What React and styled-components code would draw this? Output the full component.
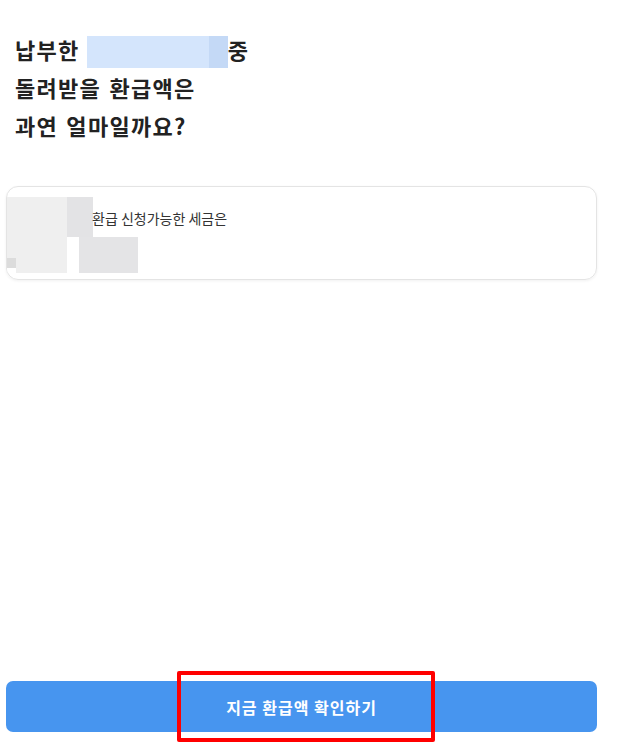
import styled, { createGlobalStyle } from "styled-components";

const GlobalStyle = createGlobalStyle`
  html, body {
    margin: 0;
    padding: 0;
    background: #fff;
  }
  body {
    font-family: "Noto Sans CJK KR", "Noto Sans", sans-serif;
  }
`;

const Page = styled.div`
  display: flex;
  flex-direction: column;
  height: 753px;
  box-sizing: border-box;
  padding: 0 20px 21px 6px;
`;

const Heading = styled.h1`
  margin: 30px 0 0 9px;
  font-size: 22px;
  font-weight: 700;
  line-height: 38px;
  color: #222;
  letter-spacing: 1.3px;
  word-spacing: 2px;
`;

const Masked = styled.span`
  display: inline-flex;
  vertical-align: middle;
  height: 32px;
  margin: -2px 0 0 7px;
  background: #d4e5fc;
  width: 141px;
  justify-content: flex-end;
  &::after {
    content: "";
    width: 19px;
    background: #c4d9f6;
  }
`;

const Card = styled.div`
  margin-top: 42px;
  height: 94px;
  box-sizing: border-box;
  border: 1px solid #e4e4e4;
  border-radius: 12px;
  box-shadow: 0 1px 3px rgba(0, 0, 0, 0.06);
  display: flex;
  align-items: flex-start;
  overflow: hidden;
`;

const Thumb = styled.svg`
  flex: 0 0 86px;
  height: 76px;
  margin-top: 10px;
  margin-left: -1px;
  display: block;
`;

const Label = styled.p`
  margin: 21px 0 0 0;
  font-size: 14px;
  color: #333;
  position: relative;
`;

const Spacer = styled.div`
  flex: 1;
`;

const ButtonWrap = styled.div`
  position: relative;
`;

const CtaButton = styled.button`
  width: 100%;
  height: 51px;
  border: none;
  border-radius: 7px;
  background: #4795ef;
  color: #fff;
  font-family: "Noto Sans CJK KR", "Noto Sans", sans-serif;
  font-size: 16px;
  font-weight: 700;
  letter-spacing: 1px;
  cursor: pointer;
`;

const Highlight = styled.div`
  position: absolute;
  left: 171px;
  top: -10px;
  width: 258px;
  height: 71px;
  box-sizing: border-box;
  border: 4px solid #ff0000;
  border-radius: 2px;
  pointer-events: none;
`;

export default function App() {
  return (
    <>
      <GlobalStyle />
      <Page>
        <Heading>
          납부한<Masked />중
          <br />
          돌려받을 환급액은
          <br />
          과연 얼마일까요?
        </Heading>
        <Card>
          <Thumb viewBox="0 0 86 76" overflow="visible">
            <rect x="0" y="0" width="61" height="76" fill="#efefef" />
            <rect x="61" y="0" width="26" height="40" fill="#e3e3e5" />
            <rect x="73" y="40" width="59" height="36" fill="#e4e4e6" />
            <rect x="0" y="61" width="10" height="10" fill="#dcdcdc" />
            <rect x="0" y="71" width="10" height="5" fill="#fff" />
          </Thumb>
          <Label>환급 신청가능한 세금은</Label>
        </Card>
        <Spacer />
        <ButtonWrap>
          <CtaButton>지금 환급액 확인하기</CtaButton>
          <Highlight />
        </ButtonWrap>
      </Page>
    </>
  );
}
